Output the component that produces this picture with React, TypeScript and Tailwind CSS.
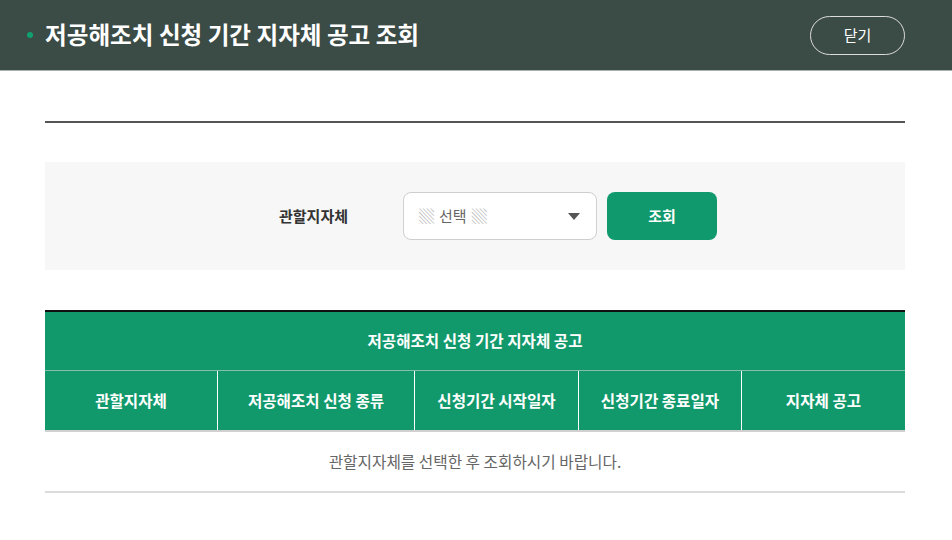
import React from "react";

const font = { fontFamily: '"Noto Sans CJK KR", "Noto Sans", sans-serif' };

export default function App() {
  const cols = [
    { label: "관할지자체", w: "w-[173px]" },
    { label: "저공해조치 신청 종류", w: "w-[197px]" },
    { label: "신청기간 시작일자", w: "w-[164px]" },
    { label: "신청기간 종료일자", w: "w-[163px]" },
    { label: "지자체 공고", w: "flex-1" },
  ];
  return (
    <div className="w-[952px] h-[540px] bg-white" style={font}>
      <div className="h-[71px] bg-[#3b4b45] border-b border-[#a9b0ad] flex items-center justify-between pl-[27px] pr-[47px]">
        <div className="flex items-center">
          <span className="w-[6px] h-[6px] rounded-full bg-[#10a06f] mr-[12px]" />
          <h1 className="text-white text-[23.6px] font-bold leading-none">
            저공해조치 신청 기간 지자체 공고 조회
          </h1>
        </div>
        <button className="w-[95px] h-[39px] rounded-full border border-[#dcdcdc] text-white text-[15px] flex items-center justify-center">
          닫기
        </button>
      </div>

      <div className="pl-[45px] pr-[47px]">
        <div className="mt-[50px] h-[2px] bg-[#555]" />

        <div className="mt-[39px] h-[108px] bg-[#f7f7f7] flex items-center pl-[234px]">
          <span className="w-[124px] text-[15px] font-bold text-[#333]">관할지자체</span>
          <div className="w-[194px] h-[48px] bg-white border border-[#cfcfcf] rounded-[8px] flex items-center justify-between pl-[15px] pr-[16px]">
            <span className="flex items-center gap-[5px] text-[15px] text-[#666]">
              <span className="text-[#aaa]">▒</span>
              <span>선택</span>
              <span className="text-[#aaa]">▒</span>
            </span>
            <svg width="12" height="7" viewBox="0 0 12 7">
              <path d="M0 0 L12 0 L6 7 Z" fill="#555" />
            </svg>
          </div>
          <button className="ml-[10px] w-[110px] h-[48px] rounded-[8px] bg-[#0f996c] text-white text-[15px] font-bold">
            조회
          </button>
        </div>

        <div className="mt-[40px] border-t-2 border-[#111]">
          <div className="h-[59px] bg-[#11996c] flex items-center justify-center text-white text-[15.6px] font-bold border-b border-[#86bfa9]">
            저공해조치 신청 기간 지자체 공고
          </div>
          <div className="h-[61px] bg-[#11996c] flex border-b-2 border-[#d0d0d0]">
            {cols.map((c, i) => (
              <div
                key={c.label}
                className={`${c.w} flex items-center justify-center text-white text-[15.6px] font-bold ${i < cols.length - 1 ? "border-r border-white" : ""}`}
              >
                {c.label}
              </div>
            ))}
          </div>
          <div className="h-[61px] flex items-center justify-center text-[15.7px] text-[#666] border-b-2 border-[#dcdcdc]">
            관할지자체를 선택한 후 조회하시기 바랍니다.
          </div>
        </div>
      </div>
    </div>
  );
}
